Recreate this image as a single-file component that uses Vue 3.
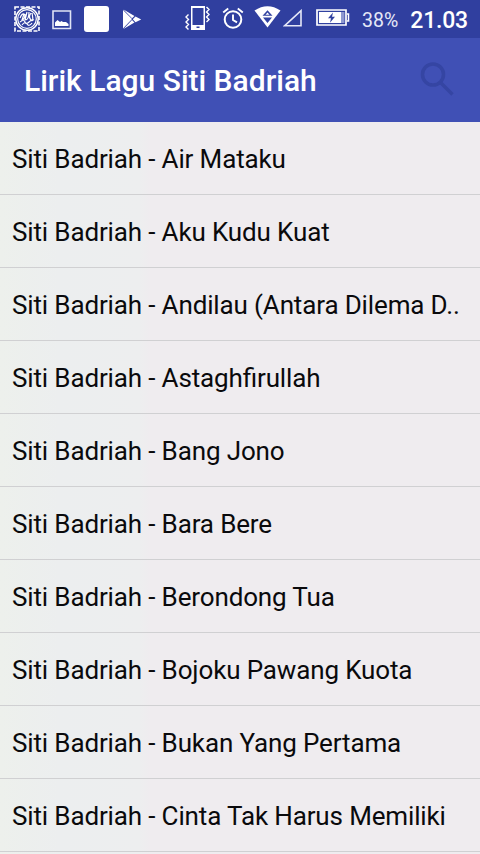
<template>
    <div class="screen">
        <div class="status">
            <div class="notifications">
                <svg class="badge" width="26" height="26" viewBox="0 0 26 26">
                    <path d="M1 1h24v24H1z" fill="none" stroke="#fff" stroke-width="1.6" stroke-dasharray="4 1.5" />
                    <circle cx="13" cy="13" r="11.2" fill="#2f3f9f" stroke="#fff" stroke-width="1.4" />
                    <circle cx="13" cy="13" r="9.3" fill="none" stroke="#fff" stroke-width="1.2" />
                    <g fill="none" stroke="#fff" stroke-width="1.2">
                        <path d="M6 12q2-5 4-4l-2 6q3-1 3-6M13 6l-2 8q4 0 4-8M17 7q-3 4 0 7t1-7" />
                        <path d="M6 16q4-3 5 0t4 0 5-2M8 19q3-4 5-1t5-1" />
                    </g>
                </svg>
                <svg class="photo" width="20" height="20" viewBox="0 0 20 20">
                    <path d="M1 1h17.5v17.5H1z" fill="none" stroke="#e0e3f5" stroke-width="1.6" />
                    <path d="M3 16v-3.5l2.500-2.500 2.500 2 1.500-1 1.500 1h3l2.500 2v2z" fill="#fff" />
                </svg>
                <div class="blank"></div>
                <svg class="play" width="20" height="21" viewBox="0 0 20 21">
                    <path d="M1 1v18.5L10 10zM1.5.5l11 6.4-2.5 2.4zM1.5 20l11-6.4-2.5-2.7zM13.5 7.4l5.7 3-5.7 2.8-2.7-2.9z" fill="#fff" />
                </svg>
            </div>
            <div class="system">
                <svg width="26" height="25" viewBox="0 0 26 25">
                    <path d="M6 0h14v24H6zM7.5 2v17h11V2zM11.5 20.5v1.5h3v-1.5z" fill="#fff" fill-rule="evenodd" />
                    <path d="M21.5 1l2.5 2.5-2.5 2.5 2.5 2.5-2.5 2.5L24 13.5 21.5 16M3.5 8.5L1 11l2.5 2.5L1 16l2.5 2.5L1 21l2.5 2.5" fill="none" stroke="#fff" stroke-width="1.4" />
                </svg>
                <svg class="alarm" width="22" height="22" viewBox="0 0 22 22">
                    <circle cx="11" cy="12.5" r="8.3" fill="none" stroke="#fff" stroke-width="2" />
                    <path d="M1.2 5.5l5-4M20.8 5.5l-5-4M11 7.5V13l4 2.4" fill="none" stroke="#fff" stroke-width="1.9" />
                </svg>
                <svg class="wifi" width="27" height="22" viewBox="0 0 27 22">
                    <path d="M.5 4.5Q13.5 -4 26.5 4.5L13.5 21.5z" fill="#fff" />
                    <path d="M13.5 4.2l5 5.6h-10zM9 11.5h9l-4.500 5.500z" fill="#3041a0" />
                    <path d="M13.5 6.5l2 2.3h-4z" fill="#fff" />
                </svg>
                <svg class="signal" width="20" height="19" viewBox="0 0 20 19">
                    <path d="M1.500 16.800L18 1.700v15.100z" fill="none" stroke="#e6e8f7" stroke-width="1.600" />
                </svg>
                <svg class="battery" width="34" height="18" viewBox="0 0 34 18">
                    <path d="M1 1h29v15H1z" fill="#3041a0" stroke="#fff" stroke-width="1.7" />
                    <path d="M3 3h22v11H3z" fill="#fff" />
                    <path d="M25 3h3.5v11H25z" fill="#8f99d0" />
                    <path d="M31 5h1.5v7H31" fill="none" stroke="#fff" stroke-width="1.5" />
                    <path d="M17 3.500l-5 5.800h3L14 13.700l5-5.900h-3z" fill="#3041a0" />
                </svg>
                <span class="percent">38%</span>
                <span class="clock">21.03</span>
            </div>
        </div>

        <div class="toolbar">
            <h1>Lirik Lagu Siti Badriah</h1>
            <svg class="search" width="36" height="36" viewBox="0 0 36 36">
                <circle cx="13" cy="12.500" r="10.500" />
                <path d="M20.500 20.500l12 12" />
            </svg>
        </div>

        <ul class="songs">
            <li v-for="song in songs" :key="song">{{ artist }} - {{ song }}</li>
        </ul>
    </div>
</template>

<script setup>
const artist = 'Siti Badriah'

const songs = [
    'Air Mataku',
    'Aku Kudu Kuat',
    'Andilau (Antara Dilema D..',
    'Astaghfirullah',
    'Bang Jono',
    'Bara Bere',
    'Berondong Tua',
    'Bojoku Pawang Kuota',
    'Bukan Yang Pertama',
    'Cinta Tak Harus Memiliki'
]
</script>

<style>
body {
    margin: 0;
}
</style>

<style scoped>
.screen {
    width: 480px;
    height: 854px;
    overflow: hidden;
    font-family: Roboto, sans-serif;
    background: linear-gradient(to right, #edf0ec 0, #eceeef 60px, #edeeef 140px, #efecef 150px);
}

.status {
    display: flex;
    justify-content: space-between;
    height: 38px;
    box-sizing: border-box;
    padding: 6px 12px 0 14px;
    background: #303f9f;
    color: #fff;
}

.notifications,
.system {
    display: flex;
    align-items: flex-start;
}

.photo {
    margin: 4px 0 0 12px;
}

.blank {
    width: 25px;
    height: 26px;
    margin-left: 12px;
    border-radius: 3px;
    background: #fff;
}

.play {
    margin: 3px 0 0 13px;
}

.alarm {
    margin: 1px 0 0 11px;
}

.wifi {
    margin-left: 10px;
}

.signal {
    margin: 3px 0 0 2px;
}

.battery {
    margin: 3px 0 0 13px;
}

.percent {
    margin-left: 12px;
    font-size: 19.5px;
    line-height: 29px;
    color: #e6e8f7;
}

.clock {
    margin-left: 12px;
    font-size: 23px;
    font-weight: 500;
    line-height: 29px;
    letter-spacing: -0.2px;
}

.toolbar {
    display: flex;
    align-items: center;
    justify-content: space-between;
    height: 84px;
    box-sizing: border-box;
    padding: 0 24px;
    background: #4050b5;
}

h1 {
    margin: 0;
    padding-top: 2px;
    font-size: 30px;
    font-weight: 500;
    line-height: 36px;
    color: #fff;
}

.search {
    fill: none;
    stroke: #3545a3;
    stroke-width: 3.6;
}

.songs {
    margin: 0;
    padding: 0;
    list-style: none;
}

.songs li {
    height: 73px;
    box-sizing: border-box;
    padding: 0 12px;
    border-bottom: 1px solid #d0d0d2;
    font-size: 26px;
    font-feature-settings: "liga" 1;
    line-height: 75px;
    letter-spacing: -0.14px;
    white-space: nowrap;
    color: #0a0a0c;
}
</style>
